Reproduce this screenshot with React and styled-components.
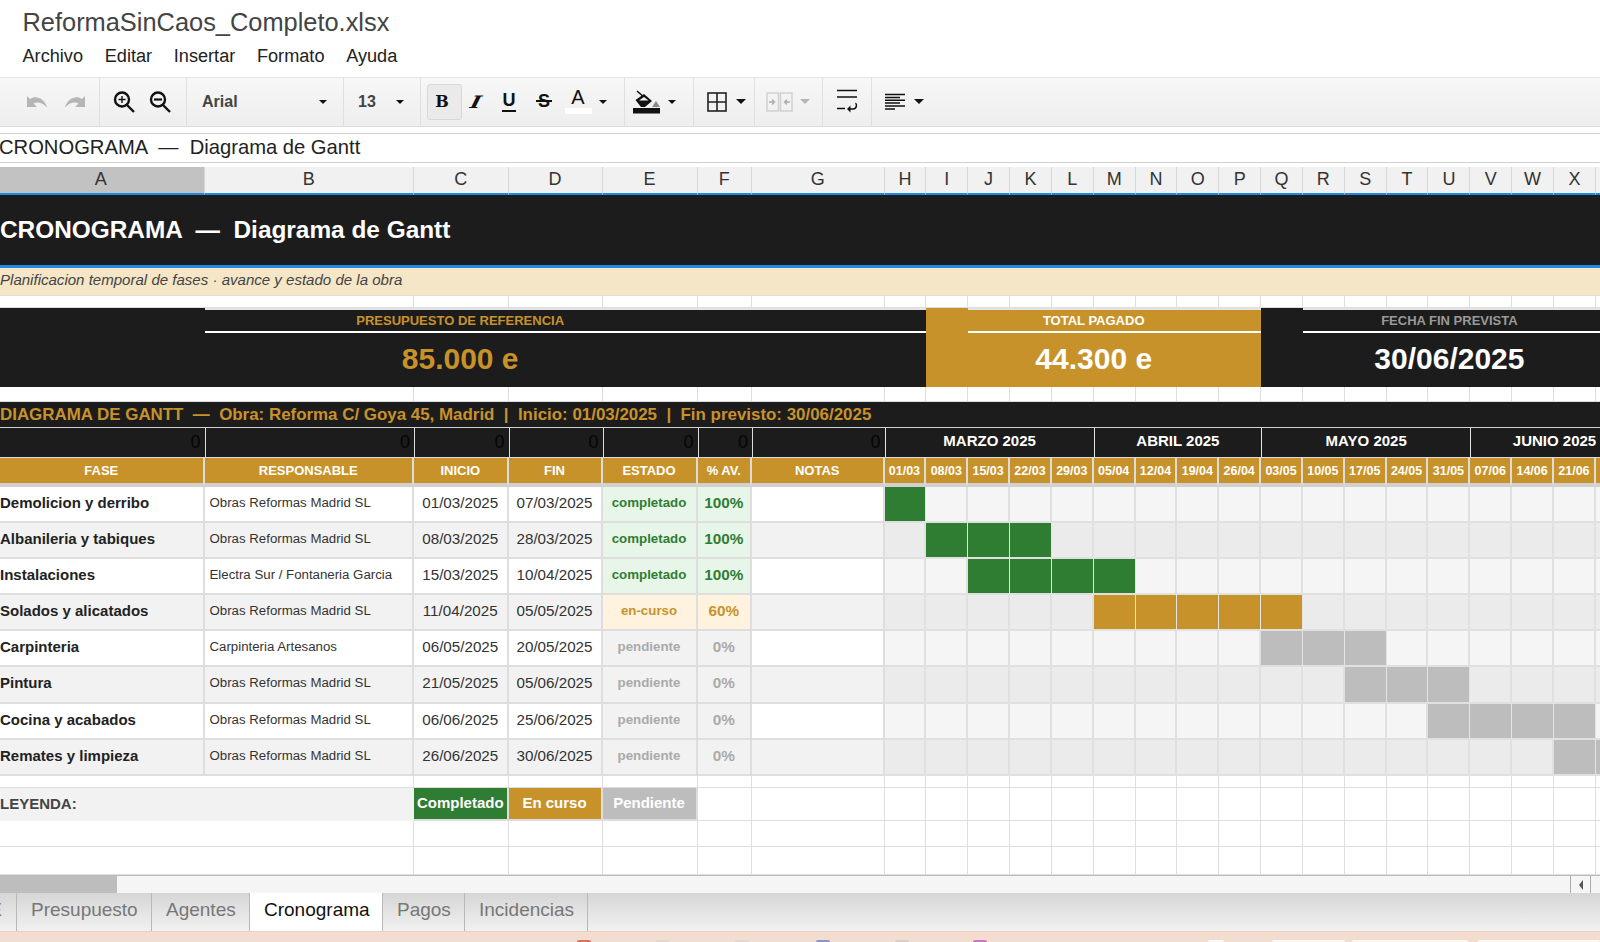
import React from 'react';
import styled, { createGlobalStyle } from 'styled-components';

const GlobalStyle = createGlobalStyle`
  html, body { margin: 0; padding: 0; background: #fff; }
  body { font-family: "Liberation Sans", Arial, sans-serif; color: #333; }
`;

const DARK = '#1c1c1c';
const GOLD = '#c8922a';
const GREEN = '#2e7d32';
const GREY = '#bdbdbd';
const LINE = '#dedede';
const WEEK = 41.85;

const Page = styled.div`
  width: 1600px;
  height: 942px;
  overflow: hidden;
  display: flex;
  flex-direction: column;
`;

const TitleBar = styled.div`
  height: 44px;
  padding: 6px 0 0 22.5px;
  box-sizing: border-box;
  font-size: 25.4px;
  line-height: 32px;
  color: #444;
`;

const MenuBar = styled.div`
  height: 32.5px;
  padding-left: 22.5px;
  display: flex;
  gap: 21.7px;
  font-size: 18.15px;
  line-height: 24px;
  color: #222;
`;

const Toolbar = styled.div`
  height: 48px;
  flex-shrink: 0;
  display: flex;
  background: linear-gradient(#f7f7f7, #eeeeee);
  border-top: 1px solid #e6e6e6;
  border-bottom: 1px solid #dcdcdc;
  box-sizing: content-box;
`;

const Group = styled.div`
  width: ${p => p.$w}px;
  padding-left: ${p => p.$pl || 0}px;
  padding-right: ${p => p.$pr || 0}px;
  box-sizing: border-box;
  flex-shrink: 0;
  display: flex;
  align-items: center;
  border-right: 1px solid #e0e0e0;
  &:last-child { border-right: 0; }
`;

const Slot = styled.div`
  width: ${p => p.$w}px;
  height: 36px;
  flex-shrink: 0;
  display: flex;
  align-items: center;
  justify-content: center;
  color: #111;
`;

const ActiveSlot = styled(Slot)`
  box-sizing: border-box;
  padding-right: 5px;
  background: #eaeaea;
  border: 1px solid #d8d8d8;
  border-radius: 3px;
  font-family: "DejaVu Serif", serif;
  font-weight: 700;
  font-size: 16px;
`;

const SerifGlyph = styled(Slot)`
  font-family: "DejaVu Serif", serif;
  font-weight: 700;
  font-style: italic;
  font-size: 17px;
`;

const SlantedI = styled.span`
  display: block;
  transform: skewX(-14deg) scaleX(1.3);
`;

const UnderGlyph = styled(Slot)`
  flex-direction: column;
  font-size: 18px;
  line-height: 17px;
  font-weight: 700;
  &::after {
    content: '';
    width: 14px;
    height: 2px;
    margin-top: 1px;
    background: #111;
  }
`;

const StrikeGlyph = styled(Slot)`
  position: relative;
  font-size: 18px;
  font-weight: 700;
  &::after {
    content: '';
    position: absolute;
    left: 8px;
    width: 16px;
    top: 16px;
    height: 2px;
    background: #111;
  }
`;

const ColorGlyph = styled(Slot)`
  flex-direction: column;
  font-size: 20px;
  line-height: 20px;
  padding-bottom: 2px;
  box-sizing: border-box;
  &::after {
    content: '';
    width: 27px;
    height: 6px;
    margin-top: 1px;
    background: #fff;
  }
`;

const SelectLabel = styled.div`
  flex: 1;
  font-size: 16px;
  font-weight: 700;
  color: #444;
`;

const Caret = styled.div`
  width: 0;
  height: 0;
  margin: 0 auto;
  border-left: ${p => p.$size || 4}px solid transparent;
  border-right: ${p => p.$size || 4}px solid transparent;
  border-top: ${p => p.$size || 4}px solid ${p => p.$muted ? '#b5b5b5' : '#111'};
`;

const FormulaBar = styled.div`
  height: 30px;
  margin-top: 6.5px;
  flex-shrink: 0;
  box-sizing: border-box;
  border-top: 1px solid #cfcfcf;
  border-bottom: 1px solid #cfcfcf;
  font-size: 20.2px;
  line-height: 27px;
  text-indent: -1px;
  white-space: pre;
  color: #222;
`;

const Sheet = styled.div`
  flex-shrink: 0;
  margin-top: 3.5px;
  height: 708.6px;
  overflow: hidden;
`;

const Grid = styled.div`
  display: grid;
  width: 1638px;
  grid-template-columns: 204.5px 209.5px 94.5px 94px 95px 54.5px 132.5px repeat(18, ${WEEK}px);
  grid-template-rows:
    28px 70px 31px 12px 79px 15px 26px 29px 30px
    repeat(8, 36.2px) 12px 33px 26px 28px;
`;

const ColHead = styled.div`
  background: ${p => p.$active ? '#c2c2c2' : '#f1f1f1'};
  border-right: 1px solid #d6d6d6;
  border-bottom: 2px solid #1e88e5;
  padding-right: ${p => p.$active ? 2 : 0}px;
  font-size: 18px;
  line-height: 25px;
  text-align: center;
  color: #333;
`;

const Band = styled.div`
  grid-column: 1 / -1;
  background: ${DARK};
  display: flex;
  align-items: center;
  white-space: pre;
`;

const BigTitle = styled(Band)`
  color: #fff;
  font-size: 24.4px;
  font-weight: 700;
`;

const Subtitle = styled(Band)`
  background: #f5e6c8;
  color: #444;
  font-size: 15.05px;
  font-style: italic;
  padding-bottom: 3px;
  border-top: 3px solid #1e88e5;
  border-bottom: 1px solid #e8e0d0;
  box-sizing: border-box;
`;

const GoldBand = styled(Band)`
  color: ${GOLD};
  font-size: 16.92px;
  font-weight: 700;
  padding-top: 1px;
  border-bottom: 1px solid #cfcfcf;
  box-sizing: border-box;
`;

const Blank = styled.div`
  background: #fff;
  border-right: ${p => p.$open ? 0 : `1px solid ${LINE}`};
  border-bottom: 1px solid ${LINE};
`;

const Kpi = styled.div`
  grid-column: span ${p => p.$span};
  position: relative;
  background: ${p => p.$gold ? GOLD : DARK};
  color: ${p => p.$color};
  padding-right: ${p => p.$nudge || 0}px;
  display: flex;
  flex-direction: column;
  text-align: center;
  &::before {
    content: '';
    position: absolute;
    left: ${p => p.$inset}px;
    right: 0;
    top: 0;
    height: 2px;
    background: #e4e4e4;
  }
  &::after {
    content: '';
    position: absolute;
    left: ${p => p.$inset}px;
    right: 0;
    top: 23px;
    height: 2px;
    background: #fff;
  }
`;

const KpiLabel = styled.div`
  height: 25px;
  padding-top: 2px;
  box-sizing: border-box;
  font-size: 13px;
  font-weight: 700;
  line-height: 21px;
  color: ${p => p.$color};
`;

const KpiValue = styled.div`
  flex: 1;
  font-size: 30px;
  font-weight: 700;
  line-height: 52px;
`;

const ZeroCell = styled.div`
  background: ${DARK};
  border-left: ${p => p.$first ? 0 : '1px solid #ddd'};
  border-right: 1px solid #ddd;
  padding-right: 4px;
  font-size: 18px;
  line-height: 28px;
  text-align: right;
  color: #050505;
  margin-right: -1px;
`;

const MonthCell = styled.div`
  grid-column: span ${p => p.$span};
  background: ${DARK};
  border-left: 1.5px solid #e4e4e4;
  color: #fff;
  font-size: 15px;
  font-weight: 700;
  line-height: 26px;
  text-align: center;
`;

const HeadCell = styled.div`
  background: ${GOLD};
  border-right: 2px solid #dcdcdc;
  border-top: 1px solid #dcdcdc;
  border-bottom: 4px solid #d0d0d0;
  color: #fff;
  font-size: ${p => p.$small ? 12.5 : 13}px;
  font-weight: 700;
  line-height: 26px;
  text-align: center;
  white-space: nowrap;
  overflow: hidden;
`;

const Cell = styled.div`
  background: ${p => p.$bg};
  color: ${p => p.$color || '#333'};
  border-right: 2px solid ${LINE};
  border-bottom: 2px solid ${LINE};
  font-size: ${p => p.$size}px;
  font-weight: ${p => p.$bold ? 700 : 400};
  text-align: ${p => p.$left ? 'left' : 'center'};
  padding-left: ${p => p.$pad || 0}px;
  line-height: 31px;
  white-space: nowrap;
  overflow: hidden;
`;

const Bar = styled.div`
  background: ${p => p.$bar || (p.$even ? '#ebebeb' : '#f5f5f5')};
  border-right: ${p => p.$bar ? '1px' : '2px'} solid ${p => p.$bar ? '#e4e4e4' : '#e0e0e0'};
  border-bottom: 2px solid #e0e0e0;
`;

const LegendName = styled.div`
  grid-column: span 2;
  background: #f2f2f2;
  color: #444;
  font-size: 15px;
  font-weight: 700;
  line-height: 31px;
`;

const LegendSwatch = styled.div`
  background: ${p => p.$bg};
  color: #fff;
  border-right: 2px solid #ddd;
  border-bottom: 2px solid #ddd;
  font-size: 15px;
  font-weight: 700;
  line-height: 30px;
  text-align: center;
  white-space: nowrap;
`;

const Scrollbar = styled.div`
  height: 18px;
  flex-shrink: 0;
  display: flex;
  background: #f5f5f5;
  border-top: 1px solid #bcbcbc;
  box-sizing: border-box;
`;

const Thumb = styled.div`
  width: 117px;
  background: #bdbdbd;
`;

const ScrollFill = styled.div`
  flex: 1;
`;

const ScrollArrow = styled.div`
  width: 19px;
  margin-right: 9px;
  border-left: 1px solid #aaa;
  border-right: 1px solid #aaa;
  display: flex;
  align-items: center;
  justify-content: center;
  &::before {
    content: '';
    border-top: 5px solid transparent;
    border-bottom: 5px solid transparent;
    border-right: 4px solid #555;
  }
`;

const TabStrip = styled.div`
  height: 37.5px;
  flex-shrink: 0;
  display: flex;
  background: linear-gradient(#d6d6d6, #f1f1f1);
`;

const Tab = styled.div`
  padding: 0 14px;
  width: ${p => p.$w}px;
  box-sizing: border-box;
  flex-shrink: 0;
  font-size: 19px;
  line-height: 34px;
  text-align: center;
  white-space: nowrap;
  overflow: hidden;
  color: ${p => p.$active ? '#111' : '#777'};
  background: ${p => p.$active ? '#fff' : 'transparent'};
  border-right: 1px solid #b8b8b8;
`;

const CutTab = styled(Tab)`
  padding: 0 14px 0 0;
  direction: rtl;
  text-align: right;
`;

const TaskBar = styled.div`
  flex: 1;
  display: flex;
  align-items: flex-end;
  background: #f3ddd0;
  border-top: 1px solid #ecd0c0;
`;

const TaskItem = styled.div`
  margin-left: ${p => p.$gap}px;
  width: ${p => p.$w}px;
  height: 2px;
  flex-shrink: 0;
  background: ${p => p.$color};
  border-radius: 6px 6px 0 0;
`;

const Undo = ({ flip }) => (
  <svg width="22" height="13" viewBox="0 0 22 13" style={flip ? { transform: 'scaleX(-1)' } : undefined}>
    <path d="M1 1v11h10L7.5 8.5c3.5-2 9-1.5 13.5 4C19 4 10-.5 4 4z" fill="#b5b5b5" />
  </svg>
);

const Magnifier = ({ plus }) => (
  <svg width="24" height="24" viewBox="0 0 24 24" fill="none" stroke="#111">
    <circle cx="10" cy="9.5" r="7" strokeWidth="2.4" />
    <path d="M15 15l7 7" strokeWidth="2.4" />
    <path d={plus ? 'M6.5 9.5h7M10 6v7' : 'M6 9.5h8'} strokeWidth={plus ? 1.4 : 2.2} />
  </svg>
);

const Bucket = () => (
  <svg width="30" height="24" viewBox="0 0 30 24">
    <path d="M5 1l8 7" stroke="#111" strokeWidth="1.6" />
    <path d="M3.5 10L12 4l8 7-7 6h-4z" fill="#111" />
    <path d="M7 10.5l5-3.5 4.5 3.5z" fill="#f3f3f3" />
    <path d="M24 11l4 6h-8z" fill="#8a8a8a" />
    <rect x="1" y="18" width="27" height="5.5" fill="#111" />
  </svg>
);

const Borders = () => (
  <svg width="20" height="20" viewBox="0 0 20 20" fill="none" stroke="#222" strokeWidth="1.6">
    <rect x="1" y="1" width="18" height="18" />
    <path d="M10 1v18M1 10h18" />
  </svg>
);

const Merge = () => (
  <svg width="27" height="20" viewBox="0 0 27 20" fill="none" stroke="#cfcfcf" strokeWidth="1.4">
    <rect x="1" y="1" width="11.5" height="18" />
    <rect x="14.5" y="1" width="11.5" height="18" />
    <path d="M3 10h5M6 7.5L8.5 10 6 12.5M24 10h-5M21 7.5L18.5 10l2.5 2.5" stroke="#adadad" />
  </svg>
);

const Wrap = () => (
  <svg width="22" height="29" viewBox="0 -2 22 29" fill="none" stroke="#111" strokeWidth="1.6">
    <path d="M1 1.5h20M1 8h20M1 19.5h8" />
    <path d="M14 20h3c4 0 4-5 2.5-6" strokeWidth="1.5" />
    <path d="M14.5 16.5L11 20l3.5 3.5z" fill="#111" stroke="none" />
  </svg>
);

const Align = () => (
  <svg width="20" height="18" viewBox="0 0 20 18" fill="none" stroke="#111" strokeWidth="1.5">
    <path d="M0 1.5h20M0 4.4h15M0 7.2h20M0 10h15M0 13h20M0 16h10" />
  </svg>
);

const COLUMNS = 'A B C D E F G H I J K L M N O P Q R S T U V W X Y'.split(' ');
const FIXED_HEADS = ['FASE', 'RESPONSABLE', 'INICIO', 'FIN', 'ESTADO', '% AV.', 'NOTAS'];
const WEEKS = ['01/03', '08/03', '15/03', '22/03', '29/03', '05/04', '12/04', '19/04', '26/04', '03/05', '10/05', '17/05', '24/05', '31/05', '07/06', '14/06', '21/06', '28/06'];
const MONTHS = [['MARZO 2025', 5], ['ABRIL 2025', 4], ['MAYO 2025', 5], ['JUNIO 2025', 4]];

const STATES = {
  completado: { bg: '#e8f5e9', color: GREEN, bar: GREEN },
  'en-curso': { bg: '#fff3e0', color: GOLD, bar: GOLD },
  pendiente: { bg: '#f2f2f2', color: '#aaaaaa', bar: GREY },
};

const PHASES = [
  ['Demolicion y derribo', 'Obras Reformas Madrid SL', '01/03/2025', '07/03/2025', 'completado', '100%', 0, 1],
  ['Albanileria y tabiques', 'Obras Reformas Madrid SL', '08/03/2025', '28/03/2025', 'completado', '100%', 1, 3],
  ['Instalaciones', 'Electra Sur / Fontaneria Garcia', '15/03/2025', '10/04/2025', 'completado', '100%', 2, 4],
  ['Solados y alicatados', 'Obras Reformas Madrid SL', '11/04/2025', '05/05/2025', 'en-curso', '60%', 5, 5],
  ['Carpinteria', 'Carpinteria Artesanos', '06/05/2025', '20/05/2025', 'pendiente', '0%', 9, 3],
  ['Pintura', 'Obras Reformas Madrid SL', '21/05/2025', '05/06/2025', 'pendiente', '0%', 11, 3],
  ['Cocina y acabados', 'Obras Reformas Madrid SL', '06/06/2025', '25/06/2025', 'pendiente', '0%', 13, 4],
  ['Remates y limpieza', 'Obras Reformas Madrid SL', '26/06/2025', '30/06/2025', 'pendiente', '0%', 16, 2],
];

// bits of the next window that peek in along the bottom edge: [gap, width, colour]
const TASK_ITEMS = [
  [577, 14, '#d9705a'], [65, 14, '#e4d8d0'], [65, 14, '#e4d8d0'], [67, 14, '#8a94c8'],
  [65, 14, '#d8d0c8'], [64, 14, '#c878c0'], [221, 16, '#fff8f4'], [48, 73, '#fff8f4'],
  [7, 116, '#fff8f4'], [10, 122, '#fff8f4'],
];

const blankRow = (key, open) => COLUMNS.map((c, i) => <Blank key={key + c} $open={open && i === 0} />);

const PhaseRow = ({ phase, index }) => {
  const [name, owner, start, end, status, progress, first, length] = phase;
  const even = index % 2 === 1;
  const bg = even ? '#f2f2f2' : '#ffffff';
  const state = STATES[status];
  return (
    <>
      <Cell $bg={bg} $size={15} $bold $left $color="#222">{name}</Cell>
      <Cell $bg={bg} $size={13.25} $left $pad={5} $color="#333">{owner}</Cell>
      <Cell $bg={bg} $size={15.2}>{start}</Cell>
      <Cell $bg={bg} $size={15.2}>{end}</Cell>
      <Cell $bg={state.bg} $size={13.3} $bold $color={state.color}>{status}</Cell>
      <Cell $bg={state.bg} $size={15.3} $bold $color={state.color}>{progress}</Cell>
      <Cell $bg={bg} $size={14} />
      {WEEKS.map((week, w) => (
        <Bar key={week} $even={even} $bar={w >= first && w < first + length ? state.bar : null} />
      ))}
    </>
  );
};

export default function App() {
  return (
    <Page>
      <GlobalStyle />
      <TitleBar>ReformaSinCaos_Completo.xlsx</TitleBar>
      <MenuBar>
        {['Archivo', 'Editar', 'Insertar', 'Formato', 'Ayuda'].map(item => <div key={item}>{item}</div>)}
      </MenuBar>
      <Toolbar>
        <Group $w={100} $pl={18}>
          <Slot $w={38}><Undo /></Slot>
          <Slot $w={38}><Undo flip /></Slot>
        </Group>
        <Group $w={87} $pl={6}>
          <Slot $w={36}><Magnifier plus /></Slot>
          <Slot $w={36}><Magnifier /></Slot>
        </Group>
        <Group $w={157} $pl={15} $pr={5}>
          <SelectLabel>Arial</SelectLabel>
          <Slot $w={30}><Caret /></Slot>
        </Group>
        <Group $w={77} $pl={14} $pr={3}>
          <SelectLabel>13</SelectLabel>
          <Slot $w={34}><Caret /></Slot>
        </Group>
        <Group $w={204} $pl={6}>
          <ActiveSlot $w={35}>B</ActiveSlot>
          <SerifGlyph $w={28}><SlantedI>I</SlantedI></SerifGlyph>
          <UnderGlyph $w={38}>U</UnderGlyph>
          <StrikeGlyph $w={32}>S</StrikeGlyph>
          <ColorGlyph $w={36}>A</ColorGlyph>
          <Slot $w={14}><Caret /></Slot>
        </Group>
        <Group $w={69} $pl={4}>
          <Slot $w={36}><Bucket /></Slot>
          <Slot $w={14}><Caret /></Slot>
        </Group>
        <Group $w={61} $pl={5}>
          <Slot $w={36}><Borders /></Slot>
          <Slot $w={12}><Caret $size={5} /></Slot>
        </Group>
        <Group $w={68} $pl={6}>
          <Slot $w={36}><Merge /></Slot>
          <Slot $w={16}><Caret $size={5} $muted /></Slot>
        </Group>
        <Group $w={49} $pl={13}>
          <Slot $w={22}><Wrap /></Slot>
        </Group>
        <Group $w={100} $pl={5}>
          <Slot $w={36}><Align /></Slot>
          <Slot $w={12}><Caret $size={5} /></Slot>
        </Group>
      </Toolbar>
      <FormulaBar>CRONOGRAMA  —  Diagrama de Gantt</FormulaBar>
      <Sheet>
        <Grid>
          {/* column Y only just starts at the right edge, its labels stay out of view */}
          {COLUMNS.map((c, i) => <ColHead key={c} $active={i === 0}>{i < 24 ? c : ''}</ColHead>)}

          <BigTitle>CRONOGRAMA  —  Diagrama de Gantt</BigTitle>
          <Subtitle>Planificacion temporal de fases · avance y estado de la obra</Subtitle>
          {blankRow('top', true)}

          <Kpi $span={8} $inset={205} $nudge={6} $color={GOLD}>
            <KpiLabel $color={GOLD}>PRESUPUESTO DE REFERENCIA</KpiLabel>
            <KpiValue>85.000 e</KpiValue>
          </Kpi>
          <Kpi $span={8} $inset={42} $gold $color="#fff">
            <KpiLabel $color="#fff">TOTAL PAGADO</KpiLabel>
            <KpiValue>44.300 e</KpiValue>
          </Kpi>
          <Kpi $span={9} $inset={42} $color="#fff">
            <KpiLabel $color="#999">FECHA FIN PREVISTA</KpiLabel>
            <KpiValue>30/06/2025</KpiValue>
          </Kpi>

          {blankRow('gap', true)}

          <GoldBand>DIAGRAMA DE GANTT  —  Obra: Reforma C/ Goya 45, Madrid  |  Inicio: 01/03/2025  |  Fin previsto: 30/06/2025</GoldBand>

          {FIXED_HEADS.map((h, i) => <ZeroCell key={h} $first={i === 0}>0</ZeroCell>)}
          {MONTHS.map(([label, span]) => <MonthCell key={label} $span={span}>{label}</MonthCell>)}

          {FIXED_HEADS.map(h => <HeadCell key={h}>{h}</HeadCell>)}
          {WEEKS.map((w, i) => <HeadCell key={w} $small>{i < 17 ? w : ''}</HeadCell>)}

          {PHASES.map((phase, i) => <PhaseRow key={phase[0]} phase={phase} index={i} />)}

          {blankRow('after', true)}

          <LegendName>LEYENDA:</LegendName>
          <LegendSwatch $bg={GREEN}>Completado</LegendSwatch>
          <LegendSwatch $bg={GOLD}>En curso</LegendSwatch>
          <LegendSwatch $bg={GREY}>Pendiente</LegendSwatch>
          {COLUMNS.slice(5).map(c => <Blank key={'leg' + c} />)}

          {blankRow('e1', true)}
          {blankRow('e2', true)}
        </Grid>
      </Sheet>
      <Scrollbar>
        <Thumb />
        <ScrollFill />
        <ScrollArrow />
      </Scrollbar>
      <TabStrip>
        <CutTab $w={17}>E</CutTab>
        <Tab $w={135}>Presupuesto</Tab>
        <Tab $w={98}>Agentes</Tab>
        <Tab $w={133} $active>Cronograma</Tab>
        <Tab $w={82}>Pagos</Tab>
        <Tab $w={123}>Incidencias</Tab>
      </TabStrip>
      <TaskBar>
        {TASK_ITEMS.map(([gap, w, color], i) => <TaskItem key={i} $gap={gap} $w={w} $color={color} />)}
      </TaskBar>
    </Page>
  );
}
